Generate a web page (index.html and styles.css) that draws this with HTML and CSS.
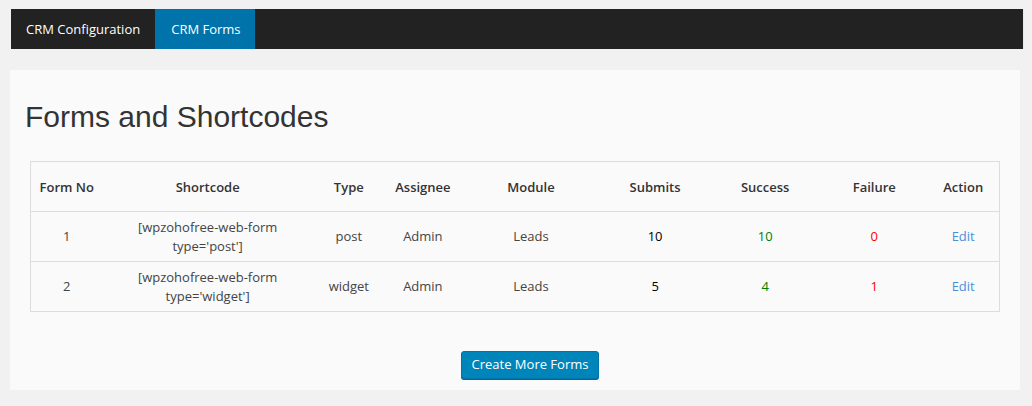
FILE: index.html
```html
<!DOCTYPE html>
<html>
<head>
<meta charset="utf-8">
<link rel="stylesheet" href="styles.css">
</head>
<body>
<nav class="tabs">
  <a class="tab">CRM Configuration</a>
  <a class="tab active">CRM Forms</a>
</nav>
<main class="panel">
  <h1 class="title">Forms and Shortcodes</h1>
  <table class="forms">
    <colgroup>
      <col style="width:72px"><col style="width:210px"><col style="width:72px"><col style="width:76px"><col style="width:140px"><col style="width:108px"><col style="width:112px"><col style="width:106px"><col style="width:72px">
    </colgroup>
    <thead>
      <tr><th>Form No</th><th>Shortcode</th><th>Type</th><th>Assignee</th><th>Module</th><th>Submits</th><th>Success</th><th>Failure</th><th>Action</th></tr>
    </thead>
    <tbody>
      <tr><td>1</td><td><span class="code">[wpzohofree-web-form type='post']</span></td><td>post</td><td>Admin</td><td>Leads</td><td class="num">10</td><td class="ok">10</td><td class="fail">0</td><td><a class="edit">Edit</a></td></tr>
      <tr><td>2</td><td><span class="code">[wpzohofree-web-form type='widget']</span></td><td>widget</td><td>Admin</td><td>Leads</td><td class="num">5</td><td class="ok">4</td><td class="fail">1</td><td><a class="edit">Edit</a></td></tr>
    </tbody>
  </table>
  <div class="actions">
    <button class="btn">Create More Forms</button>
  </div>
</main>
</body>
</html>
```
FILE: styles.css
```css
html, body { margin: 0; padding: 0; }
body {
  background: #f1f1f1;
  font-family: "Open Sans", sans-serif;
  font-size: 13px;
  color: #444;
  padding: 9px 9px 0 11px;
  box-sizing: border-box;
  width: 1032px;
  height: 406px;
  overflow: hidden;
}
.tabs {
  display: flex;
  background: #222;
  height: 40px;
  width: 1012px;
  box-shadow: 1px 0 0 #e8e8e8;
}
.tab {
  display: flex;
  align-items: center;
  padding: 0 15px 1px 15px;
  color: #fff;
  font-size: 13px;
  white-space: nowrap;
}
.tab.active {
  background: #0073aa;
  padding: 0 14px 1px 16px;
}
.panel {
  margin: 21px 0 0 -1px;
  width: 1010px;
  height: 320px;
  background: #fafafa;
  padding: 0 0 0 20px;
  box-sizing: border-box;
  overflow: hidden;
}
.title {
  margin: 0 0 0 -5px;
  padding-top: 29px;
  font-family: "Liberation Sans", Arial, sans-serif;
  font-weight: 400;
  font-size: 30px;
  line-height: 36px;
  color: #333;
}
.forms {
  margin-top: 26px;
  border-collapse: collapse;
  table-layout: fixed;
  width: 970px;
  border: 1px solid #ddd;
  text-align: center;
  color: #444;
}
.forms th {
  font-weight: 600;
  color: #333;
  height: 49px;
  padding: 0;
  border-bottom: 1px solid #ddd;
}
.forms td {
  height: 49px;
  padding: 0;
  line-height: 19px;
  border-bottom: 1px solid #ddd;
}
.code { display: inline-block; width: 150px; }
.num { color: #000; }
.ok { color: #008000; }
.fail { color: #f00; }
.edit { color: #4a90d9; }
.actions {
  display: flex;
  justify-content: center;
  margin-top: 39px;
  padding-left: 10px;
}
.btn {
  font-family: "Open Sans", sans-serif;
  font-size: 13px;
  color: #fff;
  background: #0085ba;
  border: 1px solid #0073aa;
  border-radius: 3px;
  box-shadow: 0 1px 0 #006799;
  height: 28px;
  padding: 0 10px 2px;
  white-space: nowrap;
  line-height: 24px;
}
```
